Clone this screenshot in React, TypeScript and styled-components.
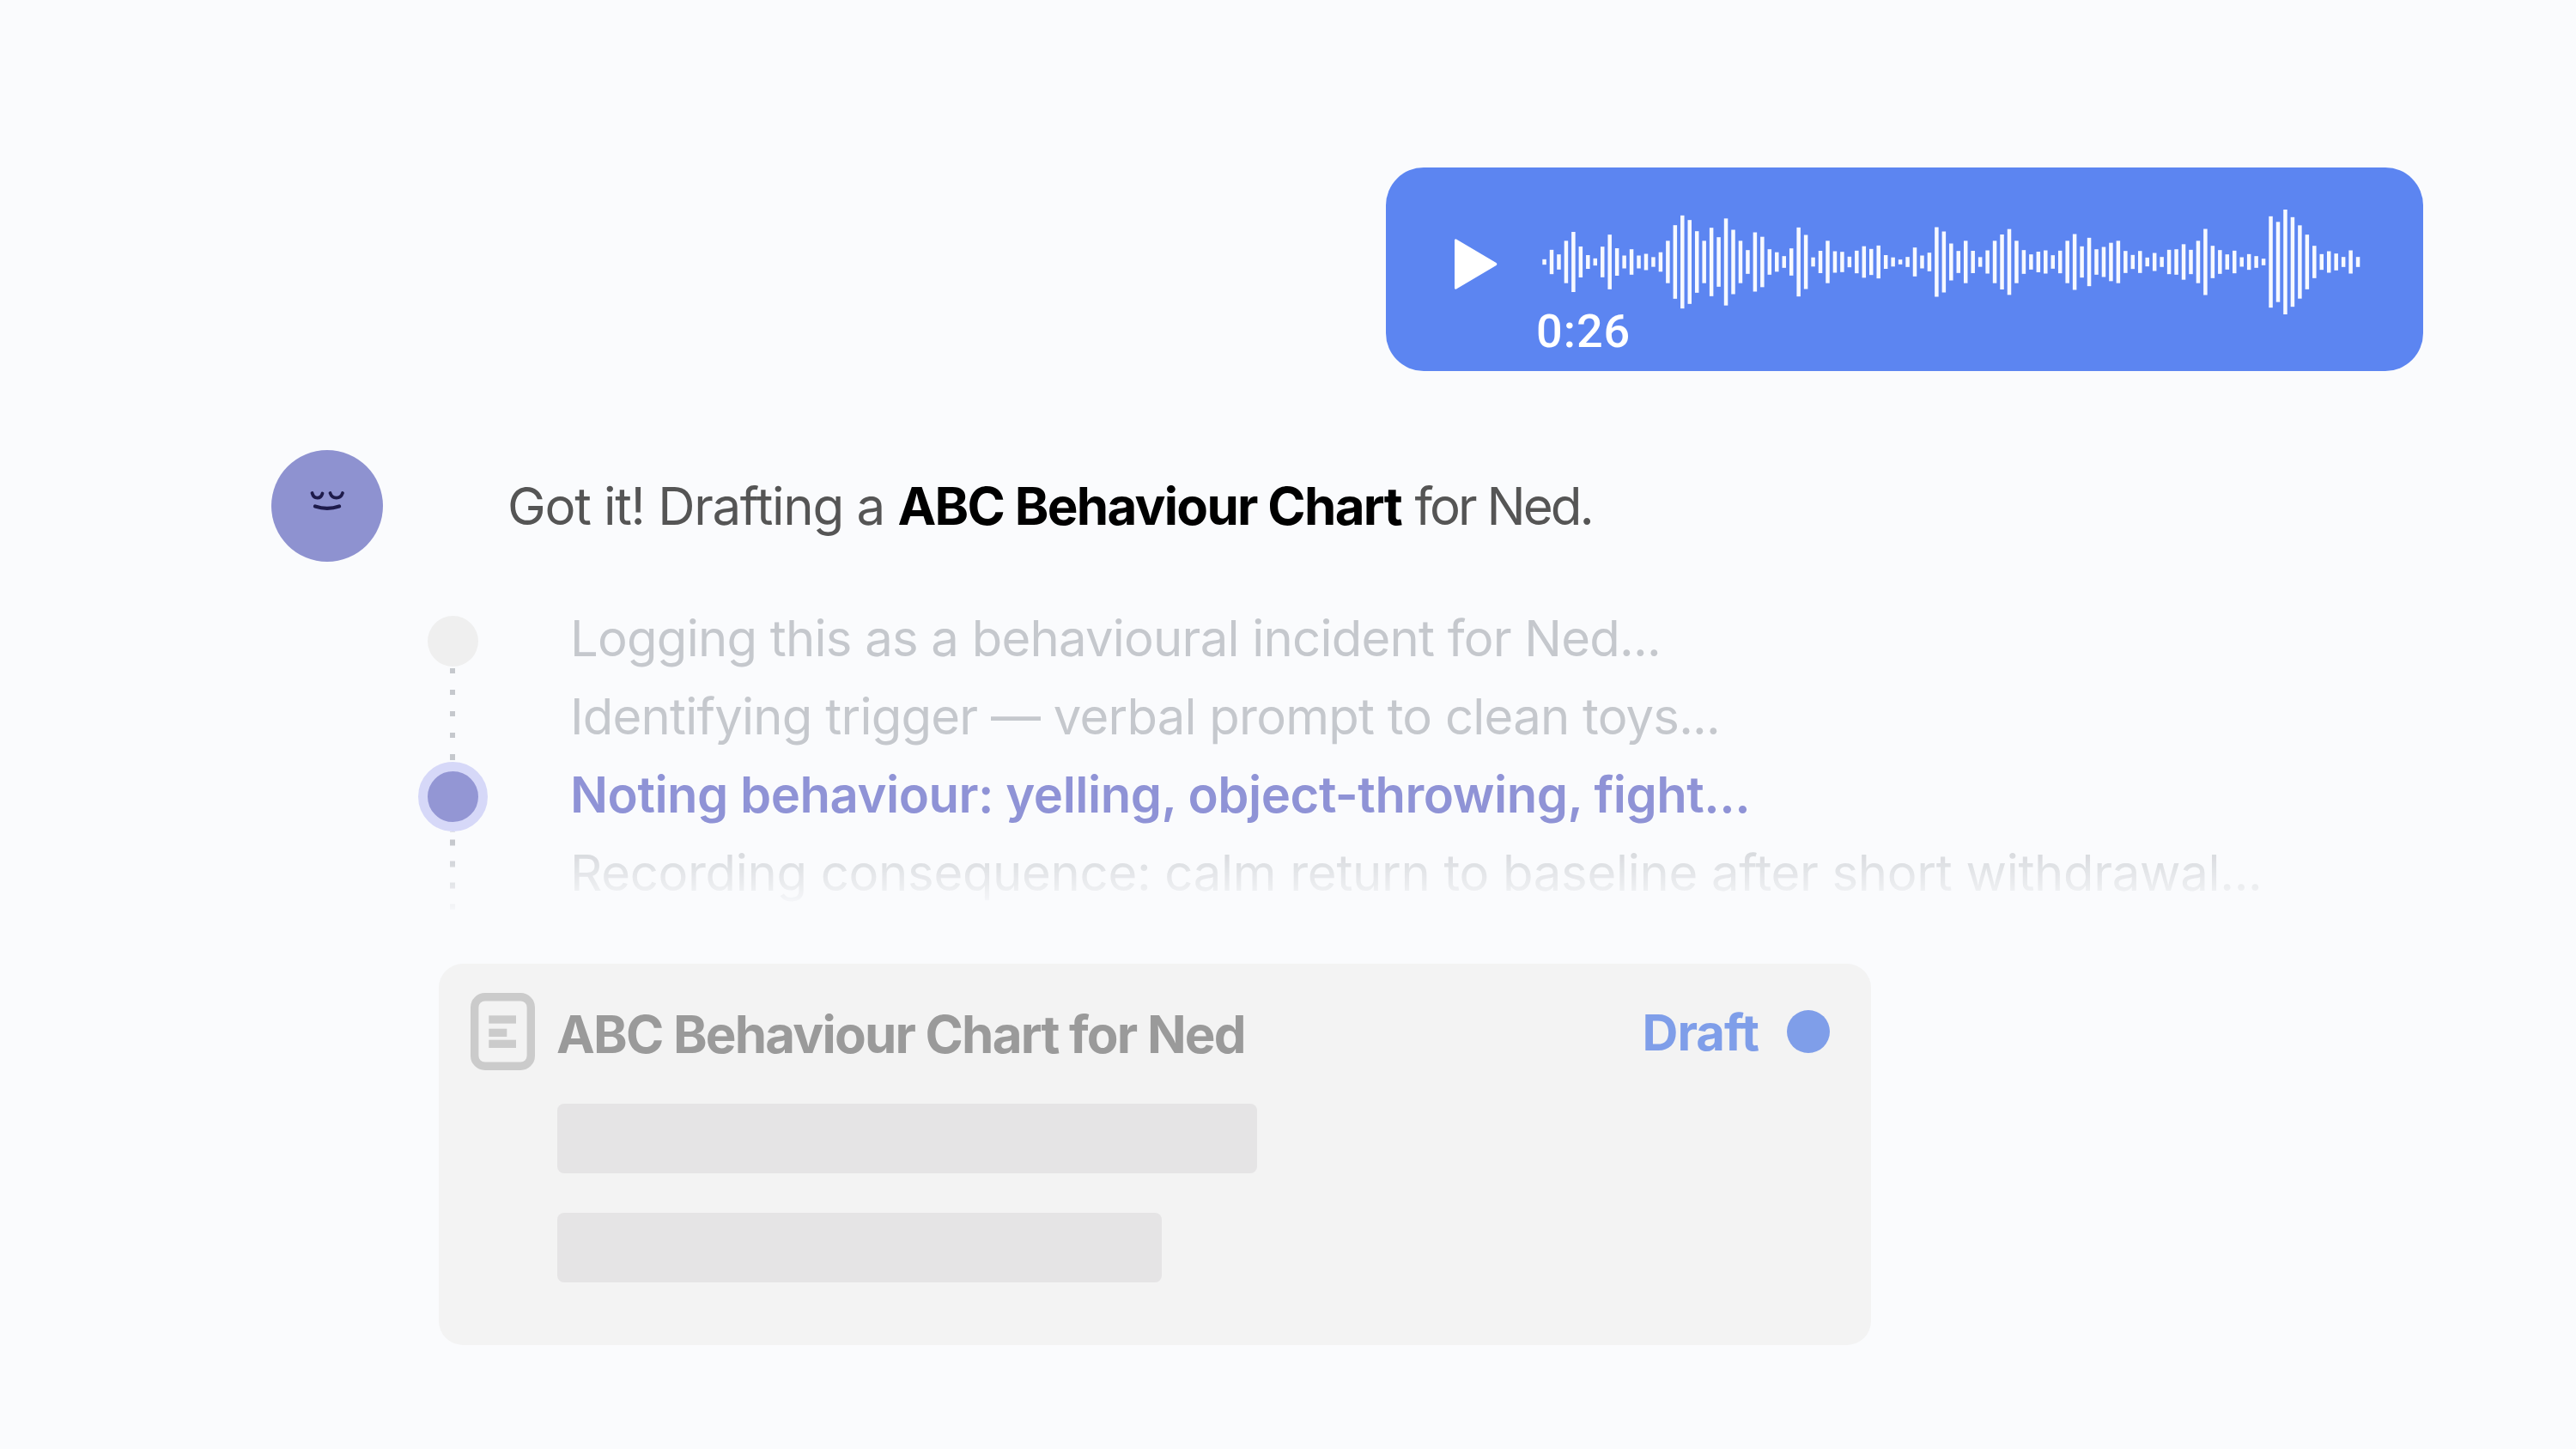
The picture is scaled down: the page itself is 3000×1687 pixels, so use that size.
import React from "react";
import styled, { createGlobalStyle } from "styled-components";

// bar heights measured from the reference, pitch is 8.46px
const BARS = [
  19, 85, 53, 148, 210, 108, 48, 25, 107, 191, 96, 45, 89, 45, 57, 34, 68, 148, 257, 325, 293, 215, 148, 239,
  173, 304, 225, 148, 83, 207, 176, 89, 68, 41, 95, 241, 189, 32, 78, 148, 75, 71, 37, 79, 110, 91, 115, 48,
  32, 17, 35, 101, 45, 65, 243, 213, 129, 77, 148, 78, 34, 81, 148, 192, 230, 148, 83, 53, 72, 81, 47, 79,
  148, 195, 109, 169, 89, 105, 134, 148, 77, 49, 77, 31, 63, 35, 85, 89, 124, 85, 148, 231, 113, 83, 53, 79,
  33, 55, 41, 23, 319, 280, 366, 313, 256, 191, 113, 55, 75, 59, 35, 81, 35,
].map((h) => h / 3);

const STEP_TRACKING = { done: -0.77, active: -0.48, next: -0.3 };

const GlobalStyle = createGlobalStyle`
  html, body {
    margin: 0;
    padding: 0;
    background: #fafbfd;
  }
`;

const Page = styled.div`
  width: 3000px;
  height: 1687px;
  overflow: hidden;
  box-sizing: border-box;
  padding: 195px 178px 0 316px;
  background: #fafbfd;
  font-family: Inter, "Noto Sans", sans-serif;
  display: flex;
  flex-direction: column;
`;

const VoiceBubble = styled.div`
  align-self: flex-end;
  width: 1208px;
  height: 237px;
  box-sizing: border-box;
  padding: 49px 0 0 80px;
  border-radius: 44px;
  background: #5c85f1;
  color: #fff;
`;

const PlayerRow = styled.div`
  display: flex;
  align-items: center;
  gap: 50px;
`;

const PlayIcon = styled.svg`
  width: 50px;
  height: 61px;
  margin-top: 4px;
  flex: none;
`;

const Wave = styled.svg`
  width: 958px;
  height: 122px;
  flex: none;
`;

const Duration = styled.div`
  margin: -6px 0 0 95px;
  font-family: Roboto, sans-serif;
  font-size: 54px;
  font-weight: 500;
  line-height: 52px;
  letter-spacing: 1px;
`;

const MessageRow = styled.div`
  display: flex;
  align-items: center;
  gap: 145px;
  margin-top: 92px;
`;

const Avatar = styled.svg`
  width: 130px;
  height: 130px;
  flex: none;
`;

const MessageText = styled.div`
  font-size: 60px;
  line-height: 72px;
  letter-spacing: -1.3px;
  color: #555;

  b {
    font-weight: 700;
    letter-spacing: -1.7px;
    color: #000;
  }
`;

const MessageTail = styled.span`
  letter-spacing: -3px;
`;

const Timeline = styled.div`
  display: flex;
  gap: 96px;
  margin: 46px 0 0 170px;
`;

const Rail = styled.div`
  width: 82px;
  padding-top: 17px;
  display: flex;
  flex-direction: column;
  align-items: center;
`;

const Mark = styled.div<{ $active?: boolean }>`
  width: 59px;
  height: 59px;
  border-radius: 50%;
  background: ${({ $active }) => ($active ? "#9396d4" : "#efefef")};
  border: ${({ $active }) => ($active ? "11.5px solid #d6d8f8" : "none")};
  flex: none;
`;

const Dots = styled.div<{ $len: number; $offset: number; $fade?: boolean }>`
  width: 6px;
  height: ${({ $len }) => $len}px;
  background: repeating-linear-gradient(to bottom, #c5c8cd 0 6.5px, transparent 6.5px 25px);
  background-position: 0 ${({ $offset }) => $offset}px;
  ${({ $fade }) => $fade && "mask-image: linear-gradient(to bottom, #000 15%, rgba(0, 0, 0, 0.08) 100%);"}
  flex: none;
`;

const Steps = styled.div`
  display: flex;
  flex-direction: column;
  margin-top: -2px;
`;

const Step = styled.div<{ $state: "done" | "active" | "next" }>`
  height: 91px;
  font-size: 58px;
  line-height: 91px;
  letter-spacing: ${({ $state }) => STEP_TRACKING[$state]}px;
  white-space: nowrap;
  font-weight: ${({ $state }) => ($state === "active" ? 600 : 400)};
  color: ${({ $state }) => ($state === "active" ? "#8f93d6" : "#c5c8cd")};
  ${({ $state }) =>
    $state === "next" && "mask-image: linear-gradient(to bottom, rgba(0, 0, 0, 0.65) 23%, rgba(0, 0, 0, 0.1) 85%);"}
`;

const DraftCard = styled.div`
  width: 1668px;
  height: 444px;
  box-sizing: border-box;
  margin: 60px 0 0 195px;
  padding: 34px 48px 0 37px;
  border-radius: 28px;
  background: #f3f3f3;
`;

const CardHeader = styled.div`
  display: flex;
  align-items: center;
  height: 90px;
`;

const DocIcon = styled.svg`
  width: 75px;
  height: 90px;
  flex: none;
`;

const CardTitle = styled.div`
  margin: 5px 0 0 25px;
  font-size: 60px;
  font-weight: 700;
  letter-spacing: -1.8px;
  color: #9a9a9a;
  flex: 1;
`;

const DraftLabel = styled.div`
  margin-top: 2px;
  font-size: 58px;
  font-weight: 700;
  letter-spacing: -1px;
  color: #7f9ee9;
`;

const DraftDot = styled.div`
  width: 50px;
  height: 50px;
  margin-left: 33px;
  border-radius: 50%;
  background: #7f9ee9;
`;

const Placeholders = styled.div`
  display: flex;
  flex-direction: column;
  gap: 46px;
  margin: 39px 0 0 101px;
`;

const Placeholder = styled.div<{ $width: number }>`
  width: ${({ $width }) => $width}px;
  height: 81px;
  border-radius: 8px;
  background: #e5e4e5;
`;

function Waveform() {
  return (
    <Wave viewBox="0 0 958 122">
      {BARS.map((h, i) => (
        <rect key={i} x={2.3 + i * 8.46} y={61 - h / 2} width={4.5} height={h} fill="#fff" fillOpacity={0.95} />
      ))}
    </Wave>
  );
}

export default function App() {
  return (
    <>
      <GlobalStyle />
      <Page>
        <VoiceBubble>
          <PlayerRow>
            <PlayIcon viewBox="0 0 50 61">
              <path d="M2 1.5 L48.5 29 a2 2 0 0 1 0 3 L2 59.5 a1.3 1.3 0 0 1-2-1 V2.5 a1.3 1.3 0 0 1 2-1z" fill="#fff" />
            </PlayIcon>
            <Waveform />
          </PlayerRow>
          <Duration>0:26</Duration>
        </VoiceBubble>

        <MessageRow>
          <Avatar viewBox="0 0 130 130">
            <circle cx="65" cy="65" r="65" fill="#8e92d0" />
            <g fill="none" stroke="#1e1b4b" strokeWidth="3.8" strokeLinecap="round">
              <path d="M47.5 50 C49.5 57.5 57.5 57.5 59.5 50.5" />
              <path d="M68.5 50 C71 57.5 80.5 57.5 83 50" />
              <path d="M51 65.5 C60 68.5 70 68.5 79 65.5" strokeWidth="4.4" />
            </g>
          </Avatar>
          <MessageText>
            Got it! Drafting a <b>ABC Behaviour Chart</b> <MessageTail>for Ned.</MessageTail>
          </MessageText>
        </MessageRow>

        <Timeline>
          <Rail>
            <Mark />
            <Dots $len={111} $offset={2} />
            <Mark $active />
            <Dots $len={91} $offset={9.5} $fade />
          </Rail>
          <Steps>
            <Step $state="done">Logging this as a behavioural incident for Ned...</Step>
            <Step $state="done">Identifying trigger — verbal prompt to clean toys...</Step>
            <Step $state="active">Noting behaviour: yelling, object-throwing, fight...</Step>
            <Step $state="next">Recording consequence: calm return to baseline after short withdrawal...</Step>
          </Steps>
        </Timeline>

        <DraftCard>
          <CardHeader>
            <DocIcon viewBox="0 0 75 90">
              <rect x="4.7" y="4.7" width="65.6" height="80.6" rx="12" fill="none" stroke="#cbcbcb" strokeWidth="9.4" />
              <rect x="21.3" y="26.3" width="31.7" height="9.3" fill="#cbcbcb" />
              <rect x="21.3" y="41.7" width="21" height="9.3" fill="#cbcbcb" />
              <rect x="21.3" y="54.7" width="31.7" height="9.3" fill="#cbcbcb" />
            </DocIcon>
            <CardTitle>ABC Behaviour Chart for Ned</CardTitle>
            <DraftLabel>Draft</DraftLabel>
            <DraftDot />
          </CardHeader>
          <Placeholders>
            <Placeholder $width={815} />
            <Placeholder $width={704} />
          </Placeholders>
        </DraftCard>
      </Page>
    </>
  );
}
